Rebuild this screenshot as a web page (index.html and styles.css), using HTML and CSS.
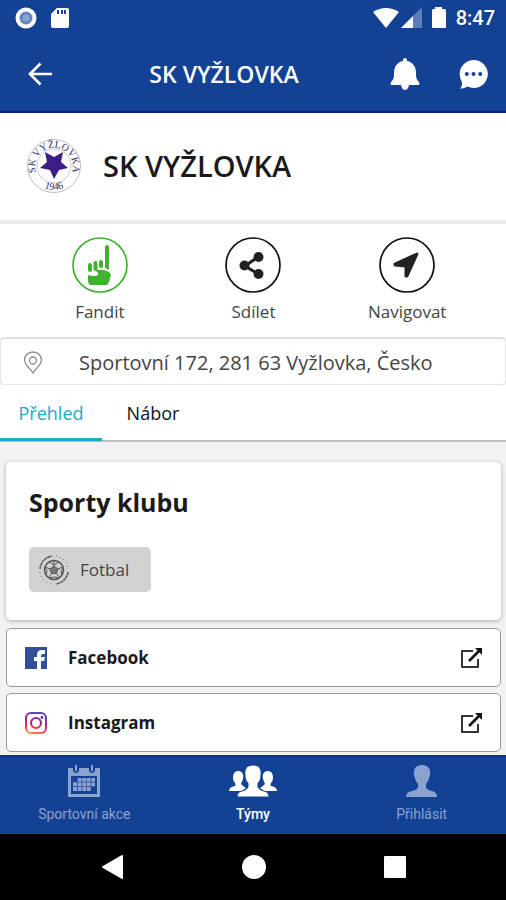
FILE: index.html
```html
<!DOCTYPE html>
<html lang="cs">
<head>
<meta charset="utf-8">
<meta name="viewport" content="width=device-width, initial-scale=1">
<title>SK VYŽLOVKA</title>
<link rel="stylesheet" href="styles.css">
</head>
<body>
<div class="status">
  <div class="status-group">
    <svg width="22" height="22" viewBox="0 0 22 22"><circle cx="11" cy="11" r="10.5" fill="#fff"/><circle cx="11" cy="11" r="6.5" fill="#6484bd"/><circle cx="11" cy="11" r="3.5" fill="#8aa3cf"/></svg>
    <svg width="18" height="22" viewBox="0 0 18 22"><path d="M6 1h10q2 0 2 2v16q0 2-2 2H2q-2 0-2-2V7z" fill="#fff"/><path d="M6 3h2v4H6zM10 3h2v4h-2zM13 3h2v4h-2z" fill="#134194"/></svg>
  </div>
  <div class="status-group status-right">
    <svg width="26" height="22" viewBox="0 0 26 22"><path d="M0 5Q13-3 26 5L13 21z" fill="#fff"/></svg>
    <svg width="22" height="22" viewBox="0 0 22 22"><path d="M22 0v21H1z" fill="#5d7db8"/><path d="M13 9v12H1z" fill="#fff"/></svg>
    <svg class="battery" width="16" height="22" viewBox="0 0 16 22"><path d="M4 0h7v2h2q2 0 2 2v16q0 1-1 1H2q-1 0-1-1V4q0-2 1-2h2z" fill="#fff"/></svg>
    <span class="clock">8:47</span>
  </div>
</div>

<header class="topbar">
  <button class="icon-button" aria-label="Zpět"><svg width="24" height="24" viewBox="0 0 24 24" fill="none" stroke="#fff" stroke-width="2.7"><path d="M24 12H2M12.500 1.500 2 12l10.500 10.500"/></svg></button>
  <div class="topbar-title">SK VYŽLOVKA</div>
  <button class="icon-button" aria-label="Upozornění"><svg width="30" height="34" viewBox="0 0 30 34" fill="#fff"><path d="M15 1q2 0 2 3c6 1 9 6 9 12 0 6 1 7 3 9q1 2 0 3H1q-1-1 0-3c2-2 3-3 3-9C4 10 7 5 13 4q0-3 2-3z"/><path d="M11 28h8q-1 5-4 5t-4-5z"/></svg></button>
  <button class="icon-button chat" aria-label="Zprávy"><svg width="30" height="30" viewBox="0 0 30 30"><path d="M15.500 1a14 14 0 1 1-6 26.500Q6 30 2 29.500 5 27 3.500 22A14 14 0 0 1 15.500 1z" fill="#fff"/><g fill="#134194"><circle cx="8.800" cy="15" r="2"/><circle cx="15.500" cy="15" r="2"/><circle cx="22.200" cy="15" r="2"/></g></svg></button>
</header>

<section class="club">
  <svg class="crest" width="56" height="56" viewBox="0 0 56 56">
    <defs><path id="arc-top" d="M9.500 33A19 19 0 1 1 46.500 33"/><path id="arc-bottom" d="M8 42A25 25 0 0 0 48 42"/></defs>
    <circle cx="28" cy="28" r="26.500" fill="#fff" stroke="#bdbcc2"/>
    <circle cx="28" cy="28" r="17" fill="none" stroke="#c9c7d3"/>
    <path d="m19 14 9 5 9-5-2 10 7 6-9 2-5 9-4-9-10-2 7-6z" fill="#3b1d85"/>
    <text class="crest-text"><textPath href="#arc-top" startOffset="50%" text-anchor="middle">SK VYŽLOVKA</textPath></text>
    <text class="crest-text"><textPath href="#arc-bottom" startOffset="50%" text-anchor="middle">1946</textPath></text>
  </svg>
  <h1>SK VYŽLOVKA</h1>
</section>

<section class="actions">
  <button class="action action-fan">
    <svg width="56" height="56" viewBox="0 0 56 56"><circle cx="28" cy="28" r="27" fill="#fff" stroke="#41b22f" stroke-width="1.700"/><g fill="#41b22f"><path d="M16 38q6 2 10 0 1-3-3-4 7-3 14 1 3 2 1 6-1 7-4 7H19q-3 0-3-5z"/><path d="M33 10q0-2 2-2t2 2v23l-4-2z"/><rect x="27" y="23" width="4" height="8" rx="2"/><rect x="21.500" y="24" width="4" height="10" rx="2"/><rect x="16" y="26" width="4" height="9" rx="2"/></g></svg>
    <span>Fandit</span>
  </button>
  <button class="action">
    <svg width="56" height="56" viewBox="0 0 56 56"><circle cx="28" cy="28" r="27" fill="#fff" stroke="#111" stroke-width="1.700"/><path d="M33 20 20 29l13 8" fill="none" stroke="#222" stroke-width="3"/><g fill="#222"><circle cx="33.500" cy="20" r="5"/><circle cx="19.500" cy="28.500" r="5"/><circle cx="33.500" cy="37" r="5"/></g></svg>
    <span>Sdílet</span>
  </button>
  <button class="action">
    <svg width="56" height="56" viewBox="0 0 56 56"><circle cx="28" cy="28" r="27" fill="#fff" stroke="#111" stroke-width="1.700"/><path d="M38 17 28 39h-1V29l-11-1v-1z" fill="#222" stroke="#222" stroke-width="3" stroke-linejoin="round"/></svg>
    <span>Navigovat</span>
  </button>
</section>

<address class="address">
  <svg width="20" height="24" viewBox="0 0 20 24" fill="none" stroke="#8b8b8b" stroke-width="1.300"><path d="M10 22C7 17 1.500 14 1.500 9a8.500 8 0 0 1 17 0c0 5-5.500 8-8.500 13z"/><circle cx="10" cy="9.500" r="3.500"/></svg>
  <span>Sportovní 172, 281 63 Vyžlovka, Česko</span>
</address>

<nav class="tabs">
  <a class="tab tab-active" href="#prehled">Přehled</a>
  <a class="tab" href="#nabor">Nábor</a>
</nav>

<main class="content">
  <section class="card" id="prehled">
    <h2>Sporty klubu</h2>
    <button class="chip">
      <svg width="32" height="32" viewBox="0 0 32 32" fill="none" stroke="#555"><circle cx="16" cy="16" r="9.500" stroke-width="1.500"/><path d="m16 12 4 3-1.500 4.500h-5L12 15z" fill="#777"/><path d="M16 12V7m4 8 5-2m-6.500 6.500 3 4m-8-4-3 4M12 15l-5-2m4-5 5 3 5-3m4 5-2 5 1 3m-3 3-5-1-5 1M8 21l1-4-2-4"/><path d="M2 15A14 14 0 0 1 14 2M30 18a14 14 0 0 1-12 12" stroke-width="1.500" stroke-dasharray="3 .5"/><path d="M18 2a14 14 0 0 1 12 12M2 18a14 14 0 0 0 12 12" stroke-dasharray="1 3"/></svg>
      <span>Fotbal</span>
    </button>
  </section>
  <a class="link" href="#facebook">
    <svg width="24" height="24" viewBox="0 0 24 24"><path d="M1 1h22v22H1z" fill="#2f4f98"/><path d="M13 23v-8h-3v-4h3V9q0-5 5-5h3v4h-2q-2 0-2 2v1h4l-1 4h-3v8z" fill="#fff"/></svg>
    <span>Facebook</span>
    <svg width="24" height="24" viewBox="0 0 24 24" fill="none" stroke="#333" stroke-width="2"><path d="M14 5H3v16h16v-8" stroke-linejoin="round"/><path d="M10 15 20 5" stroke-width="2.700" stroke="#111"/><path d="M16 2h7v7z" fill="#111" stroke="none"/></svg>
  </a>
  <a class="link" href="#instagram">
    <svg width="24" height="24" viewBox="0 0 24 24" fill="none"><defs><linearGradient id="ig" x1="14" y1="0" x2="8" y2="24" gradientUnits="userSpaceOnUse"><stop stop-color="#5146b5"/><stop offset=".45" stop-color="#a3238f"/><stop offset=".75" stop-color="#ed3c45"/><stop offset="1" stop-color="#ffac35"/></linearGradient></defs><rect x="2" y="2" width="20" height="20" rx="5" stroke="url(#ig)" stroke-width="2"/><circle cx="12" cy="12" r="5" stroke="url(#ig)" stroke-width="2.200"/><circle cx="18" cy="6.500" r="1.400" fill="#6b30a1"/></svg>
    <span>Instagram</span>
    <svg width="24" height="24" viewBox="0 0 24 24" fill="none" stroke="#333" stroke-width="2"><path d="M14 5H3v16h16v-8" stroke-linejoin="round"/><path d="M10 15 20 5" stroke-width="2.700" stroke="#111"/><path d="M16 2h7v7z" fill="#111" stroke="none"/></svg>
  </a>
</main>

<nav class="bottom">
  <a class="bottom-item" href="#akce">
    <svg width="32" height="34" viewBox="0 0 32 34"><path d="M0 4h32v29H0zM3 12v18h26V12z" fill="#8ba2ce" fill-rule="evenodd"/><path d="M5 2h6v5q-3 4-6 0zM21 2h6v5q-3 4-6 0z" fill="#134194"/><path d="M7 1h2v6H7zM23 1h2v6h-2z" fill="#8ba2ce"/><path d="M10 14h17v8h-4v5H5v-9h5z" fill="#8ba2ce"/><path d="M5 18h22M5 22.500h22M9.500 14v13M14 14v13M18.500 14v13M23 14v13" stroke="#3a5fa6"/></svg>
    <span>Sportovní akce</span>
  </a>
  <a class="bottom-item bottom-active" href="#tymy">
    <svg width="50" height="34" viewBox="0 0 50 34" fill="#fff"><path d="M10 7c4 0 6 3 5 8l-2 5q3 3 5 4l-4 3H1q0-4 6-5 1-1 0-3-2-2-2-5 0-7 5-7zM40 7c-4 0-6 3-5 8l2 5q-3 3-5 4l4 3h13q0-4-6-5-1-1 0-3 2-2 2-5 0-7-5-7z"/><path d="M25 1c6 0 9 4 8 10 0 4-1 6-3 8v4q1 3 6 4 5 1 5 6H9q0-5 5-6 5-1 6-4v-4c-2-2-3-4-3-8-1-6 2-10 8-10z" stroke="#134194" stroke-width="1"/></svg>
    <span>Týmy</span>
  </a>
  <a class="bottom-item" href="#prihlasit">
    <svg width="32" height="34" viewBox="0 0 32 34"><path d="M16 1c6 0 9 4 8 10-1 4-2 7-4 9v3q1 3 6 4 5 1 5 6H0q0-5 6-6 5-1 6-4v-3c-2-2-3-5-4-9-1-6 2-10 8-10z" fill="#8ba2ce"/></svg>
    <span>Přihlásit</span>
  </a>
</nav>

<div class="system">
  <button aria-label="Zpět v systému"><svg width="24" height="26" viewBox="0 0 24 26"><path d="M22 2v22L3 13z" fill="#fff" stroke="#fff" stroke-width="2" stroke-linejoin="round"/></svg></button>
  <button aria-label="Domů"><svg width="24" height="24" viewBox="0 0 24 24"><circle cx="12" cy="12" r="12" fill="#fff"/></svg></button>
  <button aria-label="Přehled aplikací"><svg width="22" height="22" viewBox="0 0 22 22"><rect width="22" height="22" rx="1" fill="#fff"/></svg></button>
</div>
</body>
</html>
```
FILE: styles.css
```css
* { box-sizing: border-box; }

body {
  margin: 0;
  min-height: 100vh;
  display: flex;
  flex-direction: column;
  background: #f2f2f2;
  color: #1a1a1a;
  font-family: "Open Sans", "Noto Sans", sans-serif;
}

svg { display: block; flex: none; }
a { color: inherit; text-decoration: none; }
button {
  border: 0;
  padding: 0;
  background: none;
  color: inherit;
  font: inherit;
}

.status {
  display: flex;
  justify-content: space-between;
  align-items: center;
  height: 36px;
  padding: 0 11px 0 15px;
  background: #134194;
}
.status-group { display: flex; align-items: center; gap: 14px; }
.status-right { gap: 1px; }
.battery { margin: 0 8px; }
.clock {
  color: #fff;
  font: 500 20px/24px Roboto, sans-serif;
}

.topbar {
  display: flex;
  align-items: center;
  height: 77px;
  padding: 0 18px 0 28px;
  background: #134194;
  border-bottom: 2px solid #0a1d80;
}
.icon-button { width: 30px; display: grid; place-items: start; }
.topbar-title {
  flex: 1;
  text-align: center;
  color: #fff;
  font-size: 23px;
  line-height: 30px;
  font-weight: 600;
}
.chat { margin-left: 38px; }

.club {
  display: flex;
  align-items: center;
  gap: 21px;
  height: 111px;
  padding: 0 26px 2px;
  background: #fff;
  border-bottom: 4px solid #eaeaea;
}
.crest-text { font: 10px "Liberation Serif", serif; fill: #34285f; }
h1 { margin: 0; font-size: 29px; line-height: 38px; font-weight: 600; }

.actions {
  display: grid;
  grid-template-columns: repeat(3, 1fr);
  padding: 13px 22px 13px 23px;
  background: #fff;
}
.action {
  display: flex;
  flex-direction: column;
  align-items: center;
  gap: 7px;
  color: #444;
  font-size: 17px;
  line-height: 24px;
}

.address {
  display: flex;
  align-items: center;
  gap: 36px;
  height: 48px;
  padding: 2px 22px 0;
  background: #fff;
  border: 1px solid #e4e4e4;
  border-top: 2px solid #dedede;
  border-radius: 5px;
  color: #444;
  font-size: 20px;
  font-style: normal;
}

.tabs {
  display: flex;
  height: 57px;
  background: #fff;
  border-bottom: 2px solid #bdbdbd;
}
.tab {
  display: grid;
  place-items: center;
  min-width: 102px;
  margin-bottom: -1px;
  padding-top: 2px;
  border-bottom: 3px solid transparent;
  color: #111;
  font-size: 18px;
}
.tab-active { color: #22a7c6; border-color: #22a7c6; }

.content {
  flex: 1;
  display: flex;
  flex-direction: column;
  gap: 6px;
  padding: 20px 5px 2px 6px;
}
.card {
  padding: 22px 23px 28px;
  margin-bottom: 2px;
  background: #fff;
  border-radius: 5px;
  box-shadow: 0 1px 4px #aaa;
}
h2 { margin: 0 0 27px; font-size: 25px; line-height: 36px; font-weight: 700; }
.chip {
  display: flex;
  align-items: center;
  gap: 10px;
  height: 45px;
  padding: 0 22px 0 9px;
  background: #d2d2d2;
  border-radius: 5px;
  color: #444;
  font-size: 17px;
}
.link {
  display: flex;
  align-items: center;
  gap: 20px;
  height: 59px;
  padding: 0 17px;
  background: #fff;
  border: 1px solid #999;
  border-radius: 5px;
  font-size: 17px;
  font-weight: 700;
}
.link span { flex: 1; }

.bottom {
  display: grid;
  grid-template-columns: repeat(3, 1fr);
  height: 79px;
  padding-top: 7px;
  background: #134194;
  border-top: 2px solid #0a2e8f;
  color: #8ba2ce;
  font: 14px/20px Roboto, sans-serif;
}
.bottom-item { display: flex; flex-direction: column; align-items: center; gap: 6px; }
.bottom-active { color: #fff; font-weight: 500; }

.system {
  display: flex;
  justify-content: center;
  gap: 118px;
  height: 66px;
  background: #000;
}
```
